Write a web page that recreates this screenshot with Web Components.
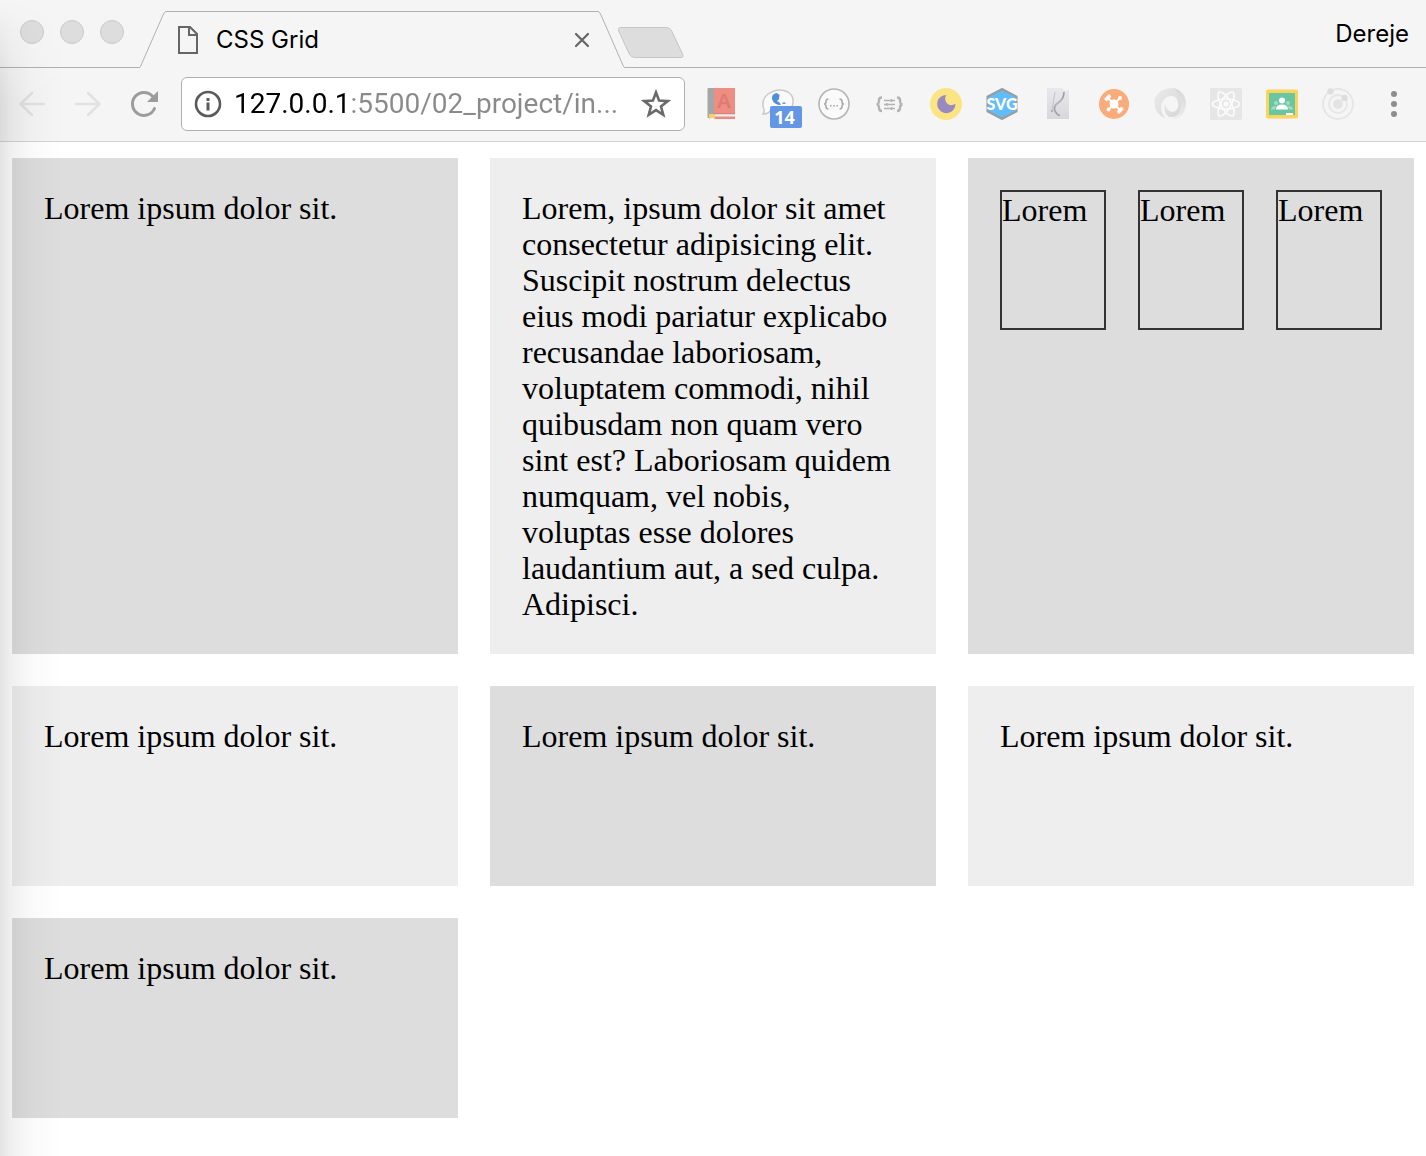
<!DOCTYPE html>
<html lang="en">
<head>
<meta charset="utf-8">
<title>CSS Grid</title>
<style>
  body { margin: 0; background: #fff; color: #000; }
</style>
</head>
<body>
<browser-window>
  <tab-strip slot="chrome" user="Dereje"><browser-tab>CSS Grid</browser-tab></tab-strip>
  <tool-bar slot="chrome"></tool-bar>
  <demo-grid>
    <grid-cell>Lorem ipsum dolor sit.</grid-cell>
    <grid-cell tone="light">Lorem, ipsum dolor sit amet consectetur adipisicing elit. Suscipit nostrum delectus eius modi pariatur explicabo recusandae laboriosam, voluptatem commodi, nihil quibusdam non quam vero sint est? Laboriosam quidem numquam, vel nobis, voluptas esse dolores laudantium aut, a sed culpa. Adipisci.</grid-cell>
    <grid-cell>
      <nested-grid>
        <nested-cell>Lorem</nested-cell>
        <nested-cell>Lorem</nested-cell>
        <nested-cell>Lorem</nested-cell>
      </nested-grid>
    </grid-cell>
    <grid-cell tone="light">Lorem ipsum dolor sit.</grid-cell>
    <grid-cell>Lorem ipsum dolor sit.</grid-cell>
    <grid-cell tone="light">Lorem ipsum dolor sit.</grid-cell>
    <grid-cell>Lorem ipsum dolor sit.</grid-cell>
  </demo-grid>
</browser-window>

<script>
const define = (name, html, setup) => customElements.define(name, class extends HTMLElement {
  constructor() {
    super();
    this.attachShadow({ mode: 'open' }).innerHTML = html;
  }
  connectedCallback() { if (setup) setup(this, this.shadowRoot); }
});

const buttonReset = `button { all: unset; box-sizing: border-box; display: block; cursor: pointer; } svg { display: block; }`;

define('browser-window', `
  <style>
    :host { display: flex; flex-direction: column; min-height: 100vh; position: relative; }
    header { background: #f5f5f5; border-bottom: 1px solid #d4d4d4; }
    /* soft shade cast along the left edge of the window */
    .shade { position: absolute; inset: 0 auto 0 0; width: 64px; pointer-events: none;
      background: linear-gradient(to right, rgba(0,0,0,.11), rgba(0,0,0,.06) 18%, rgba(0,0,0,.02) 50%, rgba(0,0,0,0));
      -webkit-mask-image: linear-gradient(to bottom, transparent, #000 100px);
      mask-image: linear-gradient(to bottom, transparent, #000 100px); }
  </style>
  <header><slot name="chrome"></slot></header>
  <main><slot></slot></main>
  <div class="shade"></div>`);

define('tab-strip', `
  <style>
    ${buttonReset}
    :host { display: flex; align-items: flex-end; height: 68px; padding: 0 17px 0 20px; box-sizing: border-box;
      background: linear-gradient(#b1b1b1, #b1b1b1) bottom / 100% 1px no-repeat #f5f5f5;
      font-family: Inter, "Liberation Sans", sans-serif; }
    .lights { display: flex; gap: 16px; align-self: flex-start; padding: 20px 15px 0 0; }
    .lights button { width: 24px; height: 24px; border-radius: 50%; background: #ddd; border: 1px solid #cbcbcb; }
    .new { align-self: flex-start; padding-top: 26px; margin-left: -8px; }
    .user { margin-left: auto; align-self: center; font-size: 24px; line-height: 32px; }
  </style>
  <div class="lights">
    <button aria-label="Close window"></button><button aria-label="Minimise"></button><button aria-label="Full screen"></button>
  </div>
  <slot></slot>
  <button class="new" aria-label="New tab">
    <svg width="68" height="34" viewBox="0 0 68 34"><path d="M4 1.500H49q4 0 5.500 3L65.500 28q1.500 3.500-1.500 3.500H18q-4 0-5.500-3L1.700 5Q.5 1.500 4 1.500z" fill="#ddd" stroke="#c6c6c6"/></svg>
  </button>
  <button class="user"></button>`,
  (host, root) => { root.querySelector('.user').textContent = host.getAttribute('user'); });

define('browser-tab', `
  <style>
    ${buttonReset}
    :host { display: flex; height: 57px; width: 486px; min-width: 0; }
    .edge { flex: none; }
    .body { flex: 1; min-width: 0; display: flex; align-items: center; background: #f5f5f5; box-sizing: border-box;
      border-top: 1px solid #b1b1b1; padding: 0 6px 0 11px; }
    .title { flex: 1; margin-left: 17px; font-size: 24px; line-height: 32px; }
  </style>
  <svg class="edge" width="27" height="57" viewBox="0 0 27 57"><path d="M0 57 1.500 55.500 24 4Q25.500.5 27 .5V57z" fill="#f5f5f5"/><path d="M0 56.500Q1 56.500 1.500 55.500L24 4Q25.500.5 27 .5" fill="none" stroke="#b1b1b1"/></svg>
  <div class="body">
    <svg width="22" height="30" viewBox="0 0 22 30" fill="none" stroke="#666" stroke-width="2"><path d="M2 2h11l7 7v19H2zM12 2v8h8"/></svg>
    <span class="title"><slot></slot></span>
    <button aria-label="Close tab"><svg width="20" height="20" viewBox="0 0 20 20" stroke="#666" stroke-width="2.200" stroke-linecap="round"><path d="M4 4l12 12M16 4 4 16"/></svg></button>
  </div>
  <svg class="edge" width="27" height="57" viewBox="0 0 27 57"><path d="M27 57 25.500 55.500 3 4Q1.500.5 0 .5V57z" fill="#f5f5f5"/><path d="M27 56.500Q26 56.500 25.500 55.500L3 4Q1.500.5 0 .5" fill="none" stroke="#b1b1b1"/></svg>`);

define('tool-bar', `
  <style>
    ${buttonReset}
    :host { display: flex; align-items: center; gap: 21px; height: 73px; padding: 0 16px 1px; box-sizing: border-box; }
    .group { display: flex; gap: 24px; flex: none; }
    address-field { flex: 1; min-width: 0; }
  </style>
  <nav class="group">
    <button aria-label="Back"><svg width="32" height="32" viewBox="0 0 32 32" fill="none" stroke="#e2e2e2" stroke-width="2.600" stroke-linecap="round" stroke-linejoin="round"><path d="M28 16H5M16 5 4.500 16 16 27"/></svg></button>
    <button aria-label="Forward"><svg width="32" height="32" viewBox="0 0 32 32" fill="none" stroke="#e2e2e2" stroke-width="2.600" stroke-linecap="round" stroke-linejoin="round"><path d="M4 16h23M16 5l11.500 11L16 27"/></svg></button>
    <button aria-label="Reload"><svg width="32" height="32" viewBox="0 0 32 32"><path d="M26.500 20.500A11.500 11.500 0 1 1 24.500 8.200" fill="none" stroke="#9c9c9c" stroke-width="3" stroke-linecap="round"/><path d="M30 3v11H19z" fill="#9c9c9c"/></svg></button>
  </nav>
  <address-field></address-field>
  <div class="group"><extension-icons></extension-icons>
    <button aria-label="Menu"><svg width="32" height="32" viewBox="0 0 32 32" fill="#8e8e8e"><circle cx="16" cy="6" r="3"/><circle cx="16" cy="16" r="3"/><circle cx="16" cy="26" r="3"/></svg></button>
  </div>`);

define('address-field', `
  <style>
    ${buttonReset}
    :host { display: flex; align-items: center; height: 54px; box-sizing: border-box; padding: 0 12px 0 11px;
      background: #fff; border: 1px solid #b1b1b1; border-radius: 6px; }
    input { flex: 1; min-width: 0; margin: 0 4px 0 11px; padding: 0; border: 0; outline: 0; height: 38px;
      font: 28px/38px Roboto, "Liberation Sans", sans-serif; color: #8a8a8a;
      /* host name in black, path in grey */
      background: linear-gradient(to right, #000 112px, #8a8a8a 112px);
      -webkit-background-clip: text; background-clip: text; -webkit-text-fill-color: transparent; }
  </style>
  <button aria-label="Site information"><svg width="30" height="30" viewBox="0 0 30 30"><circle cx="15" cy="15" r="12" fill="none" stroke="#5a5a5a" stroke-width="2.600"/><path d="M13.500 9h3v3h-3zM13.500 13.500h3v8h-3z" fill="#5a5a5a"/></svg></button>
  <input type="text" aria-label="Address" value="127.0.0.1:5500/02_project/in..." spellcheck="false">
  <button aria-label="Bookmark this page"><svg width="32" height="32" viewBox="0 0 32 32"><path d="M16 4.500l3.100 8.100 8.700.5-6.800 5.400 2.300 8.300L16 22.100l-7.300 4.700 2.300-8.300-6.800-5.400 8.700-.5z" fill="none" stroke="#6a6a6a" stroke-width="2.600"/></svg></button>`);

const extensions = [
  ['Dictionary', `<path d="M2 0H29V31H2z" fill="#f5f5f5"/><path d="M1.500 1q0-1 1-1H9v25L3 30H1.500z" fill="#a5a6a8"/><path d="M8 0h21v25H8z" fill="#ee8e83"/><path d="M8 25h21v1.500H8z" fill="#d98077"/><path d="M8 26.500h21v2H8z" fill="#ececec"/><path d="M8 28.500h21v2.500H8z" fill="#e98b80"/><path d="M3 26h6v5.500l-3-2-3 2z" fill="#f4d06d"/><text x="18" y="20" font-size="20" font-weight="bold" text-anchor="middle" font-family="Liberation Sans, sans-serif" fill="#dd7c73">A</text>`],
  ['Messages', `<path d="M1 26q2-3 .5-6Q-1 12 6 6q10-7 20-2 6 4 5 11-1 9-15 9-5 0-8-1-2 3-7 3z" fill="#fafafa" stroke="#c9c9c9" stroke-width="1.500"/><path d="M14.500 5q-5 1-4.500 6 2 6 9 6-1-3-4-4 3-2 2-4 2-2-2.500-4z" fill="#4d90d9"/><path d="M20 16q2-4 4 0z" fill="#6fa5df"/>`, '14'],
  ['JSON view', `<circle cx="16" cy="16" r="15" fill="#fafafa" stroke="#b5b5b5" stroke-width="1.600"/><path d="M10.500 11Q8 11 8 13.500 8 16 6 16q2 0 2 2.500 0 2.500 2.500 2.500M21.500 11q2.500 0 2.500 2.500 0 2.500 2 2.500-2 0-2 2.500 0 2.500-2.500 2.500" fill="none" stroke="#aaa" stroke-width="1.600"/><path d="M12 17h1.600v1.600H12zM15.200 17h1.600v1.600h-1.600zM18.400 17H20v1.600h-1.600z" fill="#aaa"/>`],
  ['Settings sync', `<path d="M8 9.500Q5 9.500 5 12q0 4.500-2.500 4.500Q5 16.500 5 20q0 3 3 3M23 9.500q3 0 3 2.500 0 4.500 2.500 4.500Q26 16.500 26 20q0 3-3 3" fill="none" stroke="#b3b3b3" stroke-width="2.400"/><path d="M10 12.500h11M10 16.500h11M10 20.500h11M17.500 11v3M13 15v3M17.500 19v3" stroke="#b3b3b3" stroke-width="1.400"/>`],
  ['Dark mode', `<circle cx="16" cy="16" r="16" fill="#fbe484"/><path d="M16.500 7q-2.500 3-.5 7 3 5 9.500 2-.5 5.500-4.500 8-5 2.500-10-.5-5-4-3.500-10Q9.500 7 16.500 7z" fill="#978ac0"/>`],
  ['SVG tool', `<path d="M16 1l14.500 7.500v15L16 31 1.500 23.500v-15z" fill="#62bdf6" stroke="#9b9b9b" stroke-width="2"/><text x="16" y="22" font-size="16" font-weight="900" text-anchor="middle" font-family="Lato, sans-serif" fill="#fff">SVG</text>`],
  ['Vector editor', `<defs><linearGradient id="p" x1="0" y1="0" x2="0" y2="1"><stop offset="0" stop-color="#e9e8ec"/><stop offset="1" stop-color="#d8d7dc"/></linearGradient></defs><path d="M5 0h15q3 4 7 2v29H5z" fill="url(#p)"/><path d="M22 4q0 7-6 11-5 3-3 8 2 4 5 4.500" fill="none" stroke="#a09da5" stroke-width="1.600"/><path d="M13 4l-3 18M10 20l11-9" stroke="#c6c3cb" stroke-width="1"/><circle cx="10" cy="23" r="1.200" fill="#b4b1ba"/>`],
  ['Graph', `<circle cx="16" cy="16" r="15" fill="#f9ab79"/><g stroke="#fff" stroke-width="2"><path d="M16 16l-6-6M16 16l6 6M16 16l6-6M16 16l-5.500 5.500"/></g><circle cx="16" cy="16" r="4.500" fill="#fff"/><path d="M6 11l5-5 2.500 2.500-5 5zM18.500 23.500l5-5L26 21l-5 5z" fill="#fff"/><circle cx="22" cy="10" r="2" fill="#fff"/><circle cx="10.500" cy="21.500" r="2" fill="#fff"/>`],
  ['JSON formatter', `<defs><linearGradient id="a" x1="0" y1="0" x2="1" y2="1"><stop offset="0" stop-color="#ebebeb"/><stop offset="1" stop-color="#d6d6d6"/></linearGradient><linearGradient id="b" x1="0" y1="0" x2="0" y2="1"><stop offset="0" stop-color="#d6d6d6"/><stop offset="1" stop-color="#ededed"/></linearGradient></defs><path d="M20 0Q4 0 .5 12-1 25 12 31 5 24 8 15 11 7 19 8q6 2 5 11-1 4-5 5-6 0-8-8-2 9 4 13 9 2 12-8Q31 5 20 0z" fill="url(#a)"/><path d="M20 0q12 4 12 16-1 14-15 16 11-5 10-16Q26 6 20 0z" fill="url(#b)"/>`],
  ['React tools', `<rect width="32" height="32" rx="2" fill="#e6e6e6"/><g fill="none" stroke="#fbfbfb" stroke-width="1.700"><ellipse cx="16" cy="16" rx="13.500" ry="5"/><ellipse cx="16" cy="16" rx="13.500" ry="5" transform="rotate(60 16 16)"/><ellipse cx="16" cy="16" rx="13.500" ry="5" transform="rotate(120 16 16)"/></g><circle cx="16" cy="16" r="2.600" fill="#fbfbfb"/>`],
  ['Classroom', `<rect y="1.500" width="32" height="29" rx="2" fill="#f9d45f"/><path d="M3 5h26v22H3z" fill="#68c6a0"/><circle cx="16" cy="12.500" r="3" fill="#fff"/><path d="M10 21.500q0-5 6-5t6 5z" fill="#fff"/><g fill="#a5dcc6"><circle cx="10" cy="15" r="1.900"/><circle cx="22" cy="15" r="1.900"/><path d="M5 21.500q0-3.500 5-3.500l-1 3.500zM27 21.500q0-3.500-5-3.500l1 3.500z"/></g><path d="M20 25h7v2h-7z" fill="#fff"/>`],
  ['Orbit', `<g fill="none" stroke="#e6e6e6" stroke-width="1.800"><circle cx="16" cy="16" r="15"/><circle cx="16" cy="16" r="9"/></g><circle cx="16" cy="16" r="4.800" fill="#e3e3e3"/><circle cx="8.500" cy="3.500" r="3.200" fill="#dedede"/><circle cx="22.500" cy="10" r="3.200" fill="#dedede"/>`]
];

define('extension-icons', `
  <style>
    ${buttonReset}
    :host { display: flex; gap: 24px; }
    button { position: relative; }
    .badge { position: absolute; left: 8px; top: 18px; width: 32px; box-sizing: border-box; padding-right: 3px; border-radius: 2px; background: #6396e4;
      color: #fff; text-align: center; font: bold 18px/22px "Open Sans", sans-serif; }
  </style>` + extensions.map(([name, art, badge]) => `
  <button aria-label="${name}"><svg width="32" height="32" viewBox="0 0 32 32">${art}</svg>${badge ? `<span class="badge">${badge}</span>` : ''}</button>`).join(''));

define('demo-grid', `
  <style>
    :host { display: grid; grid-template-columns: repeat(3, 1fr); grid-auto-rows: minmax(200px, auto); gap: 32px;
      padding: 16px 12px; font: 32px/36px "Liberation Serif", serif; }
  </style><slot></slot>`);

define('grid-cell', `
  <style>
    :host { display: block; min-width: 0; box-sizing: border-box; padding: 32px; background: #ddd; }
    :host([tone="light"]) { background: #eee; }
  </style><slot></slot>`);

define('nested-grid', `
  <style>
    :host { display: grid; grid-template-columns: repeat(3, 1fr); grid-auto-rows: 140px; gap: 32px; }
  </style><slot></slot>`);

define('nested-cell', `
  <style>
    :host { display: block; min-width: 0; box-sizing: border-box; border: 2px solid #333; }
  </style><slot></slot>`);
</script>
</body>
</html>
